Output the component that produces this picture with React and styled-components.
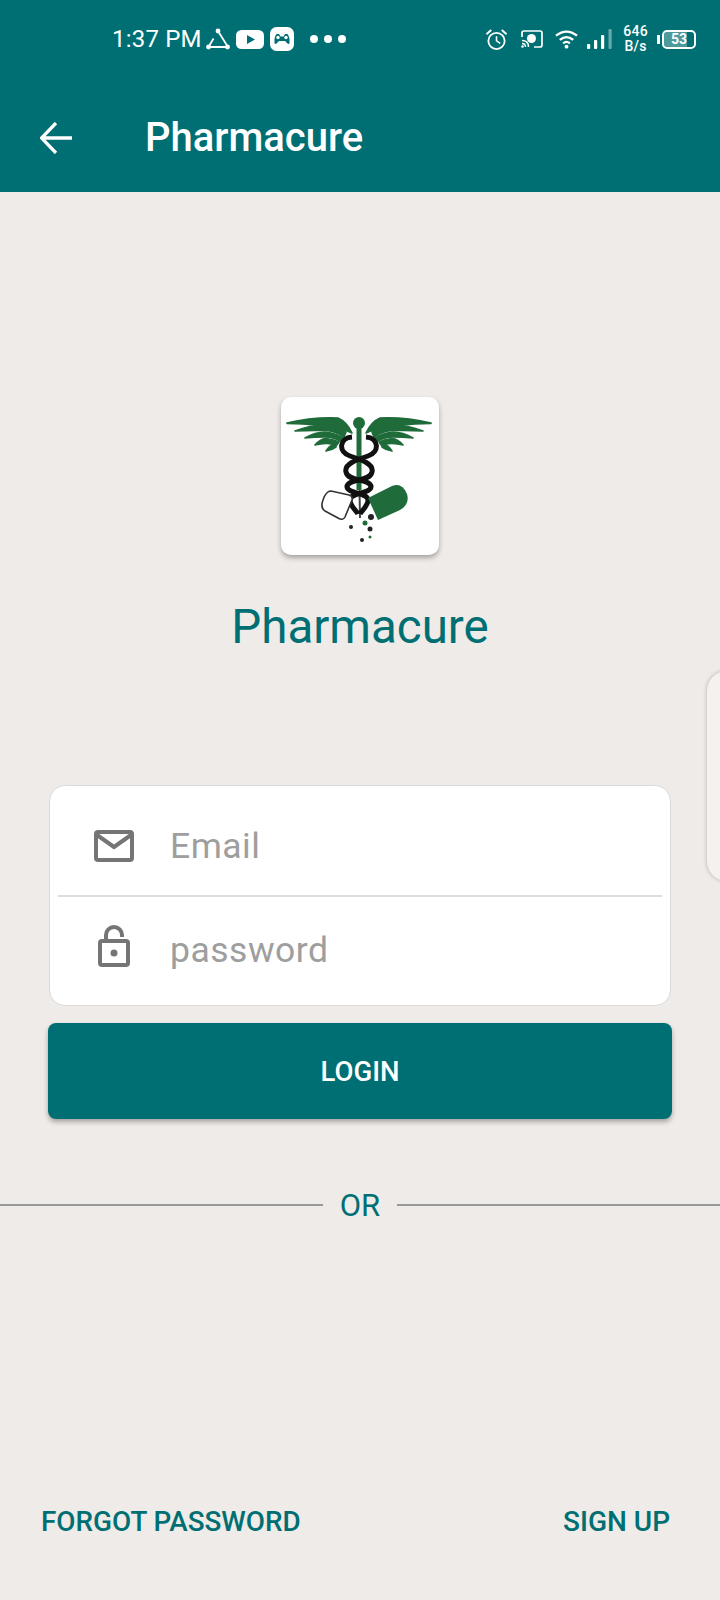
import styled, { createGlobalStyle } from "styled-components"

const GlobalStyle = createGlobalStyle`
html, body {
  margin: 0;
  padding: 0;
  background: #eeebe8;
}
* {
  box-sizing: border-box;
}
`

export default function App() {
    return (
        <>
            <GlobalStyle />
            <Page>
                <Header>
                    <StatusBar>
                        <StatusLeft>
                            <Clock>1:37 PM</Clock>
                            <TriangleIcon />
                            <VideoIcon />
                            <GameIcon />
                            <Dots><i /><i /><i /></Dots>
                        </StatusLeft>
                        <StatusRight>
                            <AlarmIcon />
                            <CastIcon />
                            <WifiIcon />
                            <SignalIcon />
                            <Speed>646<br />B/s</Speed>
                            <Battery>
                                <BatteryBody>
                                    <BatteryLevel />
                                    <span>53</span>
                                </BatteryBody>
                            </Battery>
                        </StatusRight>
                    </StatusBar>
                    <AppBar>
                        <BackIcon />
                        <AppTitle>Pharmacure</AppTitle>
                    </AppBar>
                </Header>
                <Main>
                    <LogoCard><LogoArt /></LogoCard>
                    <BrandName>Pharmacure</BrandName>
                    <FormCard>
                        <FieldRow $pad="12px 0 0">
                            <FieldIcon><MailIcon /></FieldIcon>
                            <Placeholder>Email</Placeholder>
                        </FieldRow>
                        <FieldDivider />
                        <FieldRow $pad="0 0 2px">
                            <FieldIcon $lift><LockIcon /></FieldIcon>
                            <Placeholder>password</Placeholder>
                        </FieldRow>
                    </FormCard>
                    <LoginButton>LOGIN</LoginButton>
                    <OrRow>
                        <OrLine />
                        <OrText>OR</OrText>
                        <OrLine />
                    </OrRow>
                    <BottomLinks>
                        <LinkText $size="27.8px">FORGOT PASSWORD</LinkText>
                        <LinkText>SIGN UP</LinkText>
                    </BottomLinks>
                </Main>
                <EdgeHandle />
            </Page>
        </>
    )
}

function TriangleIcon() {
    return (
        <Svg $gap={4} width="24" height="22" viewBox="0 0 24 22">
            <path d="M12 3 L22 19 H2.500 L7.500 10.500" fill="none" stroke="#fff" strokeWidth="1.800" />
            <circle cx="12" cy="3" r="2.400" fill="#fff" />
            <circle cx="2.500" cy="19" r="2.400" fill="#fff" />
            <circle cx="21.500" cy="19" r="2.400" fill="#fff" />
        </Svg>
    )
}

function VideoIcon() {
    return (
        <Svg $gap={6} width="28" height="19" viewBox="0 0 28 19">
            <rect x="0" y="0" width="28" height="19" rx="5.500" fill="#fff" />
            <path d="M11 5 L19 9.500 L11 14 Z" fill="#006f73" />
        </Svg>
    )
}

function GameIcon() {
    return (
        <Svg $gap={6} width="24" height="24" viewBox="0 0 24 24">
            <rect x="0" y="0" width="24" height="24" rx="6.500" fill="#fff" />
            <path d="M6.500 7 H9 L10.500 9.500 H13.500 L15 7 H17.500 Q20 10 19.500 16 Q19 17.500 17.500 16.500 L15 14 H9 L6.500 16.500 Q5 17.500 4.500 16 Q4 10 6.500 7 Z" fill="#006f73" />
            <circle cx="8" cy="10.500" r="1.700" fill="#fff" />
            <circle cx="16" cy="10.500" r="1.700" fill="#fff" />
        </Svg>
    )
}

function AlarmIcon() {
    return (
        <Svg width="23" height="23" viewBox="0 0 24 24">
            <circle cx="12" cy="13.500" r="8.500" fill="none" stroke="#fff" strokeWidth="1.900" />
            <path d="M12 8.500 V13.500 L16 16" fill="none" stroke="#fff" strokeWidth="1.600" />
            <path d="M1.500 6.500 L6.500 2 M22.500 6.500 L17.500 2" fill="none" stroke="#fff" strokeWidth="2" />
        </Svg>
    )
}

function CastIcon() {
    return (
        <Svg $gap={13} width="22" height="18" viewBox="0 0 22 18">
            <path d="M1 7 V3 Q1 1 3 1 H19 Q21 1 21 3 V15 Q21 17 19 17 H13" fill="none" stroke="#fff" strokeWidth="1.700" />
            <circle cx="10.500" cy="8.500" r="4.500" fill="#fff" />
            <path d="M1 10.500 Q7.500 10.500 7.500 17 M1 13.500 Q4.500 13.500 4.500 17" fill="none" stroke="#fff" strokeWidth="1.500" />
            <circle cx="1.500" cy="16.500" r="1.300" fill="#fff" />
        </Svg>
    )
}

function WifiIcon() {
    return (
        <Svg $gap={12} width="23" height="20" viewBox="0 0 24 20">
            <path d="M1 6.500 Q12 -2 23 6.500 M5 11 Q12 5 19 11 M8.500 14.500 Q12 11.500 15.500 14.500" fill="none" stroke="#fff" strokeWidth="2.400" />
            <circle cx="12" cy="18" r="2" fill="#fff" />
        </Svg>
    )
}

function SignalIcon() {
    return (
        <Svg $gap={9} width="25" height="20" viewBox="0 0 25 20">
            <rect x="0" y="15" width="3.200" height="5" rx="1" fill="#fff" />
            <rect x="7" y="11" width="3.200" height="9" rx="1" fill="#fff" />
            <rect x="14" y="6" width="3.200" height="14" rx="1" fill="#fff" />
            <rect x="21.500" y="0" width="3.200" height="20" rx="1" fill="#fff" opacity="0.4" />
        </Svg>
    )
}

function BackIcon() {
    return (
        <Svg width="32" height="32" viewBox="0 0 32 32">
            <path d="M32 16 H2 M16 1 L1.500 16 L16 31" fill="none" stroke="#fff" strokeWidth="3.300" />
        </Svg>
    )
}

function MailIcon() {
    return (
        <svg width="40" height="32" viewBox="0 0 40 32">
            <rect x="2" y="2" width="36" height="28" rx="2" fill="none" stroke="#757575" strokeWidth="4" />
            <path d="M3 5 L20 17 L37 5" fill="none" stroke="#757575" strokeWidth="4" />
        </svg>
    )
}

function LockIcon() {
    return (
        <svg width="32" height="42" viewBox="0 0 32 42">
            <rect x="2" y="16" width="28" height="24" rx="2" fill="none" stroke="#757575" strokeWidth="4" />
            <path d="M8 16 V10 A8 8 0 0 1 24 10 V12" fill="none" stroke="#757575" strokeWidth="4" />
            <circle cx="16" cy="28" r="3.500" fill="#757575" />
        </svg>
    )
}

function Wing() {
    return (
        <g fill="#1f6b3a" stroke="#1f6b3a" strokeWidth="1.600" strokeLinejoin="round">
            <path d="M287 423 Q312 417 338 418 Q347 422 352 433 L345 430 Q320 424 287 423.500 Z" />
            <path d="M295 431 Q310 425 325 425 Q338 426 346 432 L344 437 Q335 431 325 430.500 Q310 430 295 431 Z" />
            <path d="M305 438 Q315 432 325 432 Q335 433 343 438 L340 441 Q333 437 325 437 Q315 437 305 438 Z" />
            <path d="M315 445 Q320 439 326 438.500 Q333 439 339 442 L336 446 Q330 443 326 443.500 Q320 444 315 445 Z" />
            <path d="M326 451 Q330 445 333 445 L336 447 Q332 450 326 451 Z" />
        </g>
    )
}

function Helix() {
    return (
        <path d="M352 437 C339 438 338 452 350 456 C362 460 374 464 372 472 C370 482 350 478 347 486 C346 494 368 492 368 500 C368 506 362 510 360 514" fill="none" stroke="#111" strokeWidth="5" />
    )
}

function LogoArt() {
    const green = "#1f6b3a"
    return (
        <LogoSvg width="158" height="158" viewBox="281 397 158 158">
            <Wing />
            <g transform="translate(718 0) scale(-1 1)"><Wing /></g>
            <circle cx="359" cy="423" r="6" fill={green} />
            <path d="M359 425 V490" stroke={green} strokeWidth="5" />
            <path d="M359.500 490 L360 518" stroke="#444" strokeWidth="2" />
            <Helix />
            <g transform="translate(718 0) scale(-1 1)"><Helix /></g>
            <path d="M331 491 Q326 491 323 500 Q320 508 325 511 L338 518 Q343 521 345 517 L352 500 Q353 496 349 495 Z" fill="#fff" stroke="#333" strokeWidth="1.600" />
            <path d="M368 498 L392 486 Q402 482 407 494 Q410 504 400 510 L378 520 Z" fill={green} />
            <circle cx="371" cy="517" r="3" fill="#222" />
            <circle cx="365" cy="523" r="2.500" fill={green} />
            <circle cx="351" cy="527" r="2" fill="#222" />
            <circle cx="370" cy="529" r="2.500" fill="#222" />
            <circle cx="362" cy="540" r="2" fill="#222" />
            <circle cx="370" cy="537" r="1.500" fill={green} />
        </LogoSvg>
    )
}

const Page = styled.div`
position: relative;
width: 720px;
height: 1600px;
overflow: hidden;
background-color: #eeebe8;
font-family: Roboto, "Liberation Sans", sans-serif;
`

const Svg = styled.svg`
display: block;
flex-shrink: 0;
margin-left: ${props => props.$gap || 0}px;
`

const LogoSvg = styled.svg`
display: block;
filter: blur(0.6px);
`

const Header = styled.header`
height: 192px;
background-color: #006f73;
`

const StatusBar = styled.div`
height: 80px;
display: flex;
justify-content: space-between;
align-items: center;
padding: 0 24px 2px 112px;
color: white;
`

const StatusLeft = styled.div`
display: flex;
align-items: center;
`

const Clock = styled.span`
font-size: 24px;
letter-spacing: 0.2px;
`

const Dots = styled.div`
display: flex;
gap: 6px;
margin-left: 16px;
i {
    width: 8px;
    height: 8px;
    border-radius: 50%;
    background: white;
}
`

const StatusRight = styled.div`
display: flex;
align-items: center;
`

const Speed = styled.div`
margin-left: 11px;
font-size: 14px;
font-weight: 500;
letter-spacing: 0.3px;
line-height: 15px;
text-align: center;
`

const Battery = styled.div`
position: relative;
margin-left: 9px;
padding-left: 5px;
&::before {
    content: "";
    position: absolute;
    left: 0;
    top: 5px;
    width: 2.5px;
    height: 9px;
    background: white;
}
`

const BatteryBody = styled.div`
position: relative;
width: 34px;
height: 19px;
border: 2px solid white;
border-radius: 5px;
display: flex;
align-items: center;
justify-content: center;
overflow: hidden;
font-size: 14px;
font-weight: 700;
span {
    position: relative;
}
`

const BatteryLevel = styled.div`
position: absolute;
left: 0;
top: 0;
bottom: 0;
width: 78%;
background: rgba(255, 255, 255, 0.3);
`

const AppBar = styled.div`
height: 112px;
display: flex;
align-items: center;
padding: 3px 0 0 40px;
`

const AppTitle = styled.h1`
margin: 0 0 0 73px;
font-size: 40px;
font-weight: 500;
color: white;
`

const Main = styled.main`
display: flex;
flex-direction: column;
align-items: center;
height: 1408px;
padding-top: 205px;
`

const LogoCard = styled.div`
width: 158px;
height: 158px;
background: white;
border-radius: 10px;
box-shadow: 0 3px 5px rgba(0, 0, 0, 0.3);
`

const BrandName = styled.div`
margin-top: 44px;
font-size: 47.5px;
line-height: 56px;
color: #006f73;
`

const FormCard = styled.div`
width: 622px;
height: 221px;
margin-top: 130px;
padding: 0 8px;
background: white;
border: 1px solid #dcdad8;
border-radius: 16px;
`

const FieldRow = styled.div`
height: 108.500px;
display: flex;
align-items: center;
padding: ${props => props.$pad};
padding-left: 36px;
`

const FieldIcon = styled.div`
width: 40px;
display: flex;
justify-content: center;
margin-bottom: ${props => props.$lift ? "8px" : "0"};
`

const Placeholder = styled.span`
margin-left: 36px;
font-size: 35.5px;
letter-spacing: 0.5px;
color: #9e9e9e;
`

const FieldDivider = styled.div`
height: 2px;
background: #dddddd;
`

const LoginButton = styled.button`
width: 624px;
height: 96px;
margin-top: 17px;
border: none;
border-radius: 8px;
background: #006f73;
color: white;
font-family: inherit;
font-size: 27.5px;
font-weight: 500;
box-shadow: 0 3px 5px rgba(0, 0, 0, 0.3);
`

const OrRow = styled.div`
width: 100%;
display: flex;
align-items: center;
margin-top: 68px;
`

const OrLine = styled.div`
flex: 1;
height: 2px;
margin-top: -1px;
background: #999999;
`

const OrText = styled.span`
margin: 0 17px;
font-size: 31px;
color: #006f73;
`

const BottomLinks = styled.div`
width: 100%;
display: flex;
justify-content: space-between;
margin-top: auto;
padding: 0 50px 62px 41px;
`

const LinkText = styled.span`
font-size: ${props => props.$size || "28px"};
font-weight: 500;
color: #006f73;
`

const EdgeHandle = styled.div`
position: absolute;
right: -31px;
top: 671px;
width: 44px;
height: 210px;
background: #f4f1ef;
border-radius: 20px;
box-shadow: 0 0 4px rgba(0, 0, 0, 0.25);
`
